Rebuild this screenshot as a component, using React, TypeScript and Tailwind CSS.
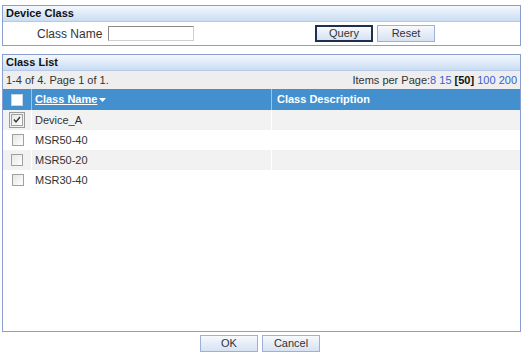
const rows = [
  { name: "Device_A", checked: true },
  { name: "MSR50-40", checked: false },
  { name: "MSR50-20", checked: false },
  { name: "MSR30-40", checked: false },
];

function Box({ checked, white }: { checked?: boolean; white?: boolean }) {
  return (
    <div
      className={`w-[12px] h-[12px] border flex items-center justify-center ${
        white ? "border-[#c8d6e6] bg-white" : "border-[#a0a0a0] bg-gradient-to-br from-[#e6e6e6] to-white"
      }`}
    >
      {checked && (
        <svg width="8" height="8" viewBox="0 0 8 8">
          <path d="M1 3.5 L3 6 L7 1" stroke="#333" strokeWidth="1.4" fill="none" />
        </svg>
      )}
    </div>
  );
}

function Btn({ label, focused }: { label: string; focused?: boolean }) {
  return (
    <button
      className={`w-[58px] h-[17px] text-[11px] leading-none text-[#333] bg-gradient-to-b from-[#f7f9fd] to-[#d6e2f3] ${
        focused ? "border-2 border-[#1f2f4f]" : "border border-[#9db1d3]"
      }`}
    >
      {label}
    </button>
  );
}

function PanelHead({ title }: { title: string }) {
  return (
    <div className="h-[16px] px-[3px] flex items-center text-[11px] font-bold text-[#111] bg-gradient-to-b from-[#f4f8fd] to-[#c9ddf3] border-b border-[#b7c9e6]">
      {title}
    </div>
  );
}

export default function App() {
  return (
    <div
      className="w-[526px] h-[354px] bg-white flex flex-col text-[#222]"
      style={{ fontFamily: '"Liberation Sans", Arial, sans-serif' }}
    >
      <div className="ml-[2px] mt-[5px] w-[519px] h-[41px] border border-[#8b9fcf] flex flex-col">
        <PanelHead title="Device Class" />
        <div className="flex-1 flex items-center">
          <div className="w-[105px] pl-[34px] text-[12px] text-[#333]">Class Name</div>
          <div className="w-[86px] h-[15px] border border-[#8a8a8a] border-r-[#d0d0d0] border-b-[#d0d0d0] bg-white" />
          <div className="ml-[121px] flex gap-[4px]">
            <Btn label="Query" focused />
            <Btn label="Reset" />
          </div>
        </div>
      </div>

      <div className="ml-[2px] mt-[8px] w-[519px] h-[278px] border border-[#8b9fcf] flex flex-col">
        <PanelHead title="Class List" />
        <div className="h-[18px] bg-[#eeeeee] flex items-center justify-between px-[3px] text-[11px] text-[#333]">
          <span>1-4 of 4. Page 1 of 1.</span>
          <span>
            Items per Page:
            <span className="text-[#3a5fcd]">8</span>{" "}
            <span className="text-[#3a5fcd]">15</span>{" "}
            <span className="font-bold text-[#111]">[50]</span>{" "}
            <span className="text-[#3a5fcd]">100</span>{" "}
            <span className="text-[#3a5fcd]">200</span>
          </span>
        </div>
        <div className="h-[21px] bg-[#4490cf] flex text-[11px] font-bold text-white">
          <div className="w-[29px] flex items-center justify-center border-r border-[#9cc5e8]">
            <Box white />
          </div>
          <div className="w-[240px] flex items-center pl-[3px] border-r border-[#9cc5e8]">
            <span className="underline">Class Name</span>
            <svg width="7" height="4" viewBox="0 0 7 4" className="ml-[2px]">
              <path d="M0 0 H7 L3.5 4 Z" fill="#fff" />
            </svg>
          </div>
          <div className="flex-1 flex items-center pl-[5px]">Class Description</div>
        </div>
        {rows.map((r, i) => (
          <div
            key={r.name}
            className={`h-[20px] flex text-[11px] text-[#333] ${i % 2 === 0 ? "bg-[#f2f2f2]" : "bg-white"}`}
          >
            <div
              className={`w-[29px] flex items-center justify-center ${
                i % 2 === 0 ? "border-r border-white" : ""
              }`}
            >
              {r.checked ? (
                <div className="w-[16px] h-[16px] border border-[#9a9a9a] flex items-center justify-center">
                  <Box checked />
                </div>
              ) : (
                <Box />
              )}
            </div>
            <div
              className={`w-[240px] flex items-center pl-[3px] ${
                i % 2 === 0 ? "border-r border-white" : ""
              }`}
            >
              {r.name}
            </div>
            <div className="flex-1" />
          </div>
        ))}
      </div>

      <div className="mt-[3px] flex justify-center gap-[4px] pr-[6px]">
        <Btn label="OK" />
        <Btn label="Cancel" />
      </div>
    </div>
  );
}
